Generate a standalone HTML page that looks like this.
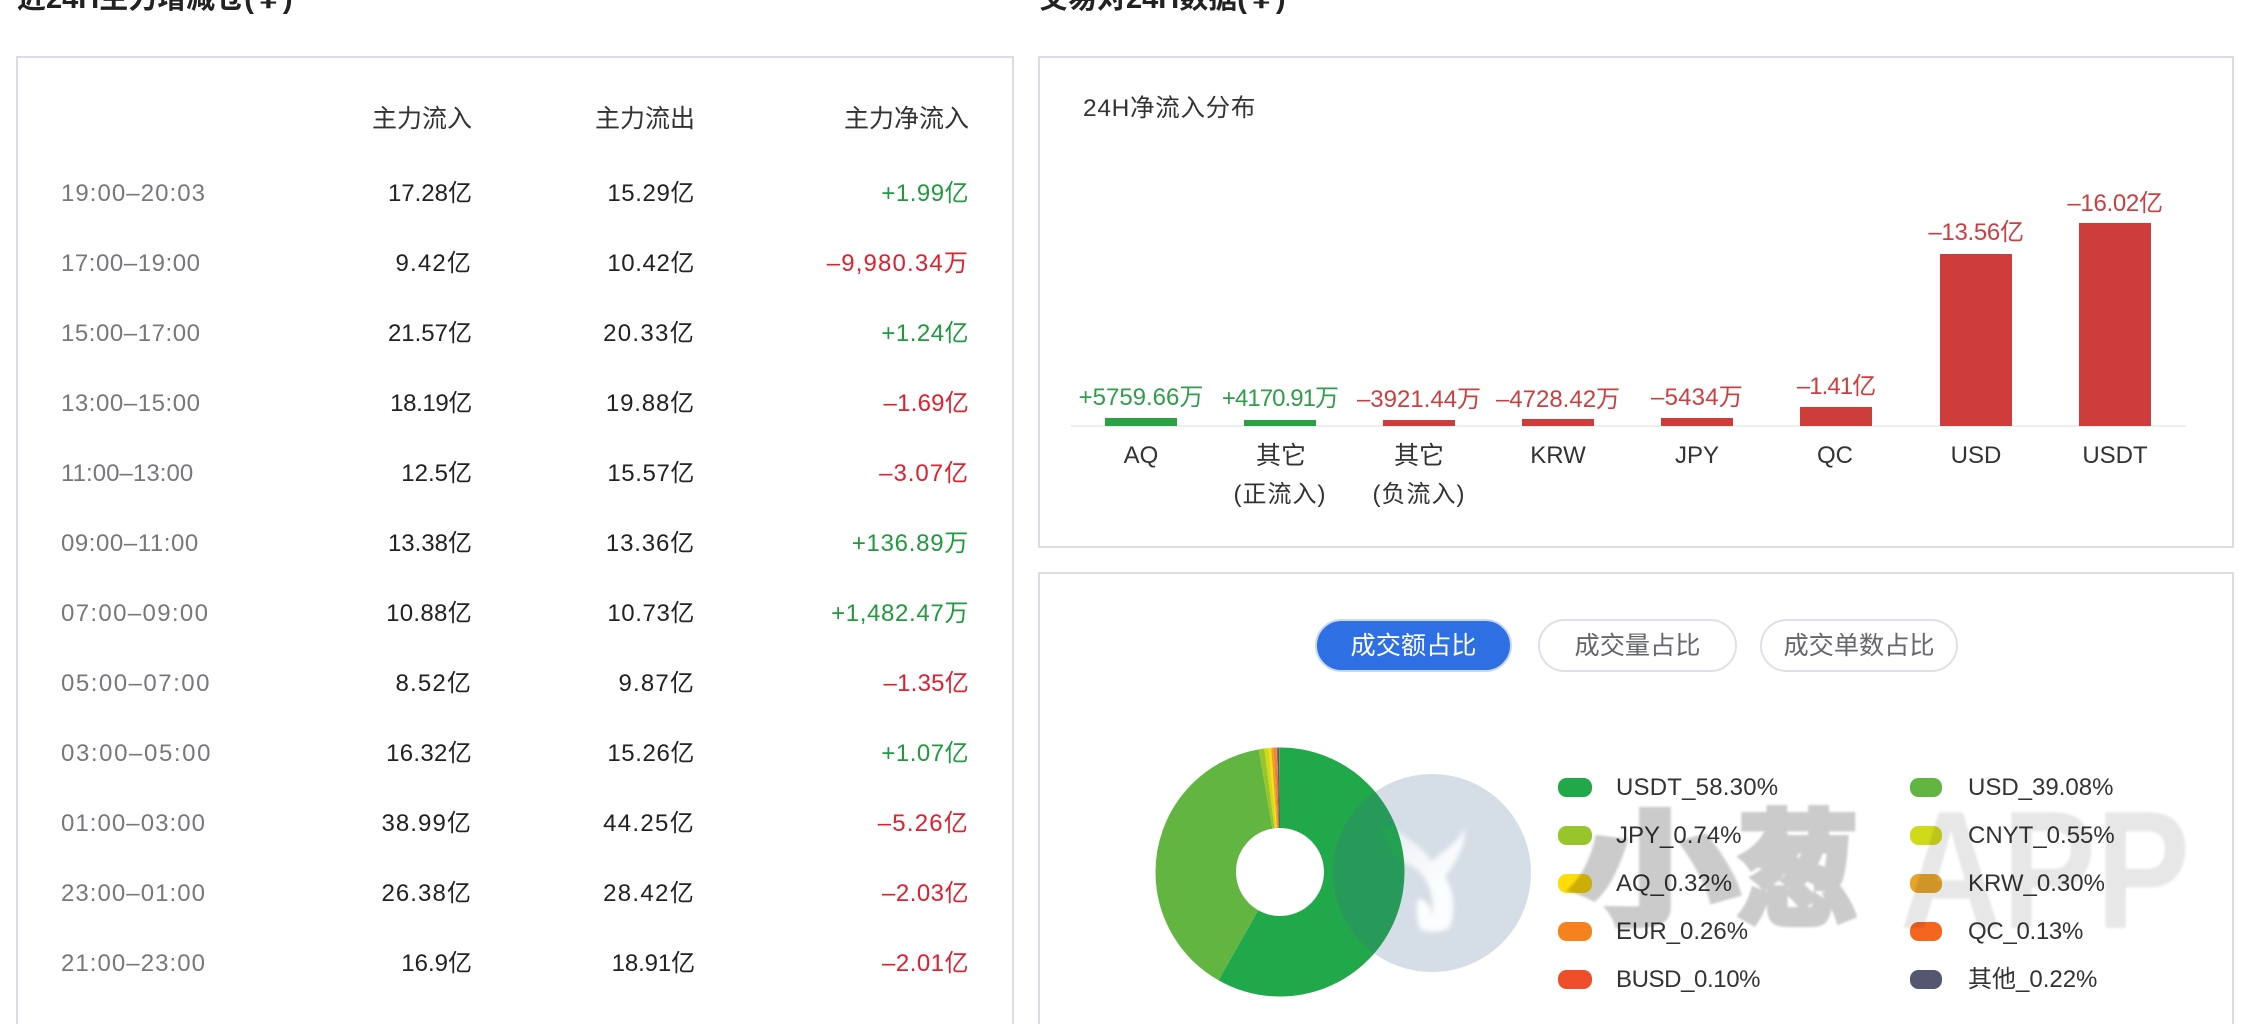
<!DOCTYPE html>
<html lang="zh">
<head>
<meta charset="utf-8">
<title>24H</title>
<style>
html,body{margin:0;padding:0;width:2256px;height:1024px;overflow:hidden;background:#fff}
body{position:relative;font-family:"Liberation Sans","Noto Sans CJK SC",sans-serif;font-size:24px;color:#222}
#page{position:absolute;left:0;top:0;width:2256px;height:1024px;overflow:hidden}
div,span{position:absolute;white-space:nowrap;box-sizing:border-box}
.card{border:2px solid #dcdce6;background:#fff}
.h{font-size:29px;font-weight:bold;color:#222;line-height:40px;height:40px;top:-21px}
.l{height:36px;line-height:36px;text-align:right;width:200px}
.t{left:61px;color:#77787d;text-align:left;width:300px}
.a{left:272px}
.b{left:495px}
.c{left:669px;width:300px}
.g{color:#1f9a3e}
.r{color:#e0202e}
.hd{top:101px;color:#333;font-size:25px}
.bar{background:#cd3d3c}
.gb{background:#2aa244}
.v{height:36px;line-height:36px;width:160px;text-align:center}
.vg{color:#2f9e4a}
.vr{color:#cd3f3f}
.x{height:36px;line-height:36px;width:160px;text-align:center;color:#333}
.btn{top:619px;height:53px;line-height:51px;border:2px solid #dfe0ea;border-radius:27px;text-align:center;color:#66676e;background:#fff;font-size:25.2px}
.m{width:34px;height:19px;border-radius:8.5px}
.n{width:32px;left:1910px}
.lg{height:36px;line-height:36px;color:#333}
.wm{top:770px;height:180px;line-height:180px;font-size:124px;font-weight:bold;color:#cbcbcb;-webkit-text-stroke:7px #cbcbcb;font-family:"Noto Sans CJK SC",sans-serif;filter:blur(1px);mix-blend-mode:multiply;transform-origin:left center}
</style>
</head>
<body>
<div id="page">

<div class="h" style="left:17px">近24H主力增减仓(￥)</div>
<div class="h" style="left:1039px">交易对24H数据(￥)</div>

<div class="card" style="left:16px;top:56px;width:998px;height:1000px"></div>
<div class="card" style="left:1038px;top:56px;width:1196px;height:492px"></div>
<div class="card" style="left:1038px;top:572px;width:1196px;height:500px"></div>

<!-- table -->
<div class="l a hd">主力流入</div>
<div class="l b hd">主力流出</div>
<div class="l c hd">主力净流入</div>

<div class="l t" style="top:176px;letter-spacing:1.05px">19:00–20:03</div><div class="l a" style="top:176px">17.28亿</div><div class="l b" style="top:176px;letter-spacing:.6px">15.29亿</div><div class="l c g" style="top:176px;letter-spacing:.48px">+1.99亿</div>
<div class="l t" style="top:246px;letter-spacing:.55px">17:00–19:00</div><div class="l a" style="top:246px;letter-spacing:1.15px">9.42亿</div><div class="l b" style="top:246px;letter-spacing:.6px">10.42亿</div><div class="l c r" style="top:246px;letter-spacing:1.15px">–9,980.34万</div>
<div class="l t" style="top:316px;letter-spacing:.55px">15:00–17:00</div><div class="l a" style="top:316px">21.57亿</div><div class="l b" style="top:316px;letter-spacing:1.3px">20.33亿</div><div class="l c g" style="top:316px;letter-spacing:.48px">+1.24亿</div>
<div class="l t" style="top:386px;letter-spacing:.55px">13:00–15:00</div><div class="l a" style="top:386px;letter-spacing:-.36px">18.19亿</div><div class="l b" style="top:386px;letter-spacing:.84px">19.88亿</div><div class="l c r" style="top:386px;letter-spacing:.24px">–1.69亿</div>
<div class="l t" style="top:456px;letter-spacing:.05px">11:00–13:00</div><div class="l a" style="top:456px">12.5亿</div><div class="l b" style="top:456px;letter-spacing:.6px">15.57亿</div><div class="l c r" style="top:456px;letter-spacing:.96px">–3.07亿</div>
<div class="l t" style="top:526px;letter-spacing:.55px">09:00–11:00</div><div class="l a" style="top:526px">13.38亿</div><div class="l b" style="top:526px;letter-spacing:.84px">13.36亿</div><div class="l c g" style="top:526px;letter-spacing:.72px">+136.89万</div>
<div class="l t" style="top:596px;letter-spacing:1.35px">07:00–09:00</div><div class="l a" style="top:596px;letter-spacing:.3px">10.88亿</div><div class="l b" style="top:596px;letter-spacing:.6px">10.73亿</div><div class="l c g" style="top:596px;letter-spacing:.65px">+1,482.47万</div>
<div class="l t" style="top:666px;letter-spacing:1.5px">05:00–07:00</div><div class="l a" style="top:666px;letter-spacing:1.15px">8.52亿</div><div class="l b" style="top:666px;letter-spacing:1.15px">9.87亿</div><div class="l c r" style="top:666px;letter-spacing:.24px">–1.35亿</div>
<div class="l t" style="top:736px;letter-spacing:1.6px">03:00–05:00</div><div class="l a" style="top:736px;letter-spacing:.3px">16.32亿</div><div class="l b" style="top:736px;letter-spacing:.6px">15.26亿</div><div class="l c g" style="top:736px;letter-spacing:.48px">+1.07亿</div>
<div class="l t" style="top:806px;letter-spacing:1.05px">01:00–03:00</div><div class="l a" style="top:806px;letter-spacing:1.08px">38.99亿</div><div class="l b" style="top:806px;letter-spacing:1.3px">44.25亿</div><div class="l c r" style="top:806px;letter-spacing:1.2px">–5.26亿</div>
<div class="l t" style="top:876px;letter-spacing:1.05px">23:00–01:00</div><div class="l a" style="top:876px;letter-spacing:1.08px">26.38亿</div><div class="l b" style="top:876px;letter-spacing:1.3px">28.42亿</div><div class="l c r" style="top:876px;letter-spacing:.48px">–2.03亿</div>
<div class="l t" style="top:946px;letter-spacing:1.05px">21:00–23:00</div><div class="l a" style="top:946px">16.9亿</div><div class="l b" style="top:946px;letter-spacing:-.12px">18.91亿</div><div class="l c r" style="top:946px;letter-spacing:.48px">–2.01亿</div>

<!-- bar chart -->
<div style="left:1083px;top:91px;height:36px;line-height:36px;color:#333;font-size:24.5px;letter-spacing:.7px">24H净流入分布</div>
<div style="left:1071px;top:425px;width:1115px;height:2px;background:#eceef2"></div>

<div class="gb" style="left:1105px;top:418px;width:72px;height:8px"></div>
<div class="gb" style="left:1244px;top:420px;width:72px;height:6px"></div>
<div class="bar" style="left:1383px;top:420px;width:72px;height:6px"></div>
<div class="bar" style="left:1522px;top:419px;width:72px;height:7px"></div>
<div class="bar" style="left:1661px;top:418px;width:72px;height:8px"></div>
<div class="bar" style="left:1800px;top:407px;width:72px;height:19px"></div>
<div class="bar" style="left:1940px;top:254px;width:72px;height:172px"></div>
<div class="bar" style="left:2079px;top:223px;width:72px;height:203px"></div>

<div class="v vg" style="left:1061px;top:380px">+5759.66万</div>
<div class="v vg" style="left:1200px;top:381px;letter-spacing:-.95px">+4170.91万</div>
<div class="v vr" style="left:1339px;top:382px">–3921.44万</div>
<div class="v vr" style="left:1478px;top:382px">–4728.42万</div>
<div class="v vr" style="left:1617px;top:380px;letter-spacing:.2px">–5434万</div>
<div class="v vr" style="left:1756px;top:369px;letter-spacing:-.95px">–1.41亿</div>
<div class="v vr" style="left:1896px;top:215px;letter-spacing:-.3px">–13.56亿</div>
<div class="v vr" style="left:2035px;top:186px;letter-spacing:-.3px">–16.02亿</div>

<div class="x" style="left:1061px;top:438px">AQ</div>
<div class="x" style="left:1201px;top:438px;font-size:25px">其它</div>
<div class="x" style="left:1200px;top:477px;letter-spacing:1px">(正流入)</div>
<div class="x" style="left:1339px;top:438px;font-size:25px">其它</div>
<div class="x" style="left:1339px;top:477px;letter-spacing:1px">(负流入)</div>
<div class="x" style="left:1478px;top:438px">KRW</div>
<div class="x" style="left:1617px;top:438px">JPY</div>
<div class="x" style="left:1755px;top:438px">QC</div>
<div class="x" style="left:1896px;top:438px">USD</div>
<div class="x" style="left:2035px;top:438px">USDT</div>

<!-- toggles -->
<div class="btn" style="left:1315px;width:197px;background:#2f6fe4;border-color:#c9d8f5;color:#fff">成交额占比</div>
<div class="btn" style="left:1538px;width:199px">成交量占比</div>
<div class="btn" style="left:1760px;width:198px">成交单数占比</div>

<!-- donut -->
<svg style="position:absolute;left:1130px;top:722px" width="300" height="300" viewBox="0 0 300 300">
  <g fill="none" stroke-width="80.5" transform="rotate(-90 150 150)">
    <circle cx="150" cy="150" r="84.25" pathLength="100" stroke="#20a84a" stroke-dasharray="58.30 41.70" stroke-dashoffset="0"/>
    <circle cx="150" cy="150" r="84.25" pathLength="100" stroke="#63b542" stroke-dasharray="39.08 60.92" stroke-dashoffset="-58.30"/>
    <circle cx="150" cy="150" r="84.25" pathLength="100" stroke="#98c52a" stroke-dasharray="0.74 99.26" stroke-dashoffset="-97.38"/>
    <circle cx="150" cy="150" r="84.25" pathLength="100" stroke="#cfdb1a" stroke-dasharray="0.55 99.45" stroke-dashoffset="-98.12"/>
    <circle cx="150" cy="150" r="84.25" pathLength="100" stroke="#ffdc0a" stroke-dasharray="0.32 99.68" stroke-dashoffset="-98.67"/>
    <circle cx="150" cy="150" r="84.25" pathLength="100" stroke="#e6a42b" stroke-dasharray="0.30 99.70" stroke-dashoffset="-98.99"/>
    <circle cx="150" cy="150" r="84.25" pathLength="100" stroke="#f5821f" stroke-dasharray="0.26 99.74" stroke-dashoffset="-99.29"/>
    <circle cx="150" cy="150" r="84.25" pathLength="100" stroke="#f56520" stroke-dasharray="0.13 99.87" stroke-dashoffset="-99.55"/>
    <circle cx="150" cy="150" r="84.25" pathLength="100" stroke="#f04e2b" stroke-dasharray="0.10 99.90" stroke-dashoffset="-99.68"/>
    <circle cx="150" cy="150" r="84.25" pathLength="100" stroke="#555770" stroke-dasharray="0.22 99.78" stroke-dashoffset="-99.78"/>
  </g>
</svg>

<!-- legend -->
<div class="m" style="left:1558px;top:778px;background:#20a84a"></div><div class="lg" style="left:1616px;top:770px;letter-spacing:.2px">USDT_58.30%</div>
<div class="m n" style="top:778px;background:#63b542"></div><div class="lg" style="left:1968px;top:770px">USD_39.08%</div>
<div class="m" style="left:1558px;top:826px;background:#98c52a"></div><div class="lg" style="left:1616px;top:818px">JPY_0.74%</div>
<div class="m n" style="top:826px;background:#cfdb1a"></div><div class="lg" style="left:1968px;top:818px">CNYT_0.55%</div>
<div class="m" style="left:1558px;top:874px;background:#ffdc0a"></div><div class="lg" style="left:1616px;top:866px">AQ_0.32%</div>
<div class="m n" style="top:874px;background:#e6a42b"></div><div class="lg" style="left:1968px;top:866px">KRW_0.30%</div>
<div class="m" style="left:1558px;top:922px;background:#f5821f"></div><div class="lg" style="left:1616px;top:914px">EUR_0.26%</div>
<div class="m n" style="top:922px;background:#f56520"></div><div class="lg" style="left:1968px;top:914px;letter-spacing:-.3px">QC_0.13%</div>
<div class="m" style="left:1558px;top:970px;background:#f04e2b"></div><div class="lg" style="left:1616px;top:962px;letter-spacing:-.4px">BUSD_0.10%</div>
<div class="m n" style="top:970px;background:#555770"></div><div class="lg" style="left:1968px;top:962px">其他_0.22%</div>

<!-- watermark -->
<svg style="position:absolute;left:1320px;top:760px" width="230" height="230" viewBox="1320 760 230 230">
  <defs>
    <filter id="bl" x="-20%" y="-20%" width="140%" height="140%"><feGaussianBlur stdDeviation="6"/></filter>
    <linearGradient id="sg" gradientUnits="userSpaceOnUse" x1="750" y1="280" x2="920" y2="470">
      <stop offset="0" stop-color="#000" stop-opacity=".5"/>
      <stop offset="1" stop-color="#000" stop-opacity=".92"/>
    </linearGradient>
    <mask id="hole" maskUnits="userSpaceOnUse" x="1320" y="760" width="230" height="230">
      <rect x="1320" y="760" width="230" height="230" fill="#fff"/>
      <g transform="translate(1130 730) scale(.3333)" filter="url(#bl)">
        <path fill="url(#sg)" d="M755 280C800 300 880 350 905 395C925 370 975 350 1005 295C1008 350 975 400 945 440C975 490 975 550 960 590C940 610 890 610 870 595C858 560 858 530 865 505C900 515 905 540 905 560C915 520 905 450 850 410C800 390 760 350 755 280Z"/>
      </g>
    </mask>
  </defs>
  <circle cx="1432" cy="873" r="99" fill="rgb(64,105,145)" fill-opacity=".22" mask="url(#hole)"/>
</svg>
<div class="wm" style="left:1570px;transform:scaleX(1.36)">小</div>
<div class="wm" style="left:1738px;transform:scaleX(.97)">葱</div>
<div style="left:1900px;top:780px;height:180px;line-height:180px;font-size:168px;font-weight:bold;color:#e7e7e7;mix-blend-mode:multiply;filter:blur(1.2px);transform-origin:left center;transform:scaleX(.84)">APP</div>

</div>
</body>
</html>
